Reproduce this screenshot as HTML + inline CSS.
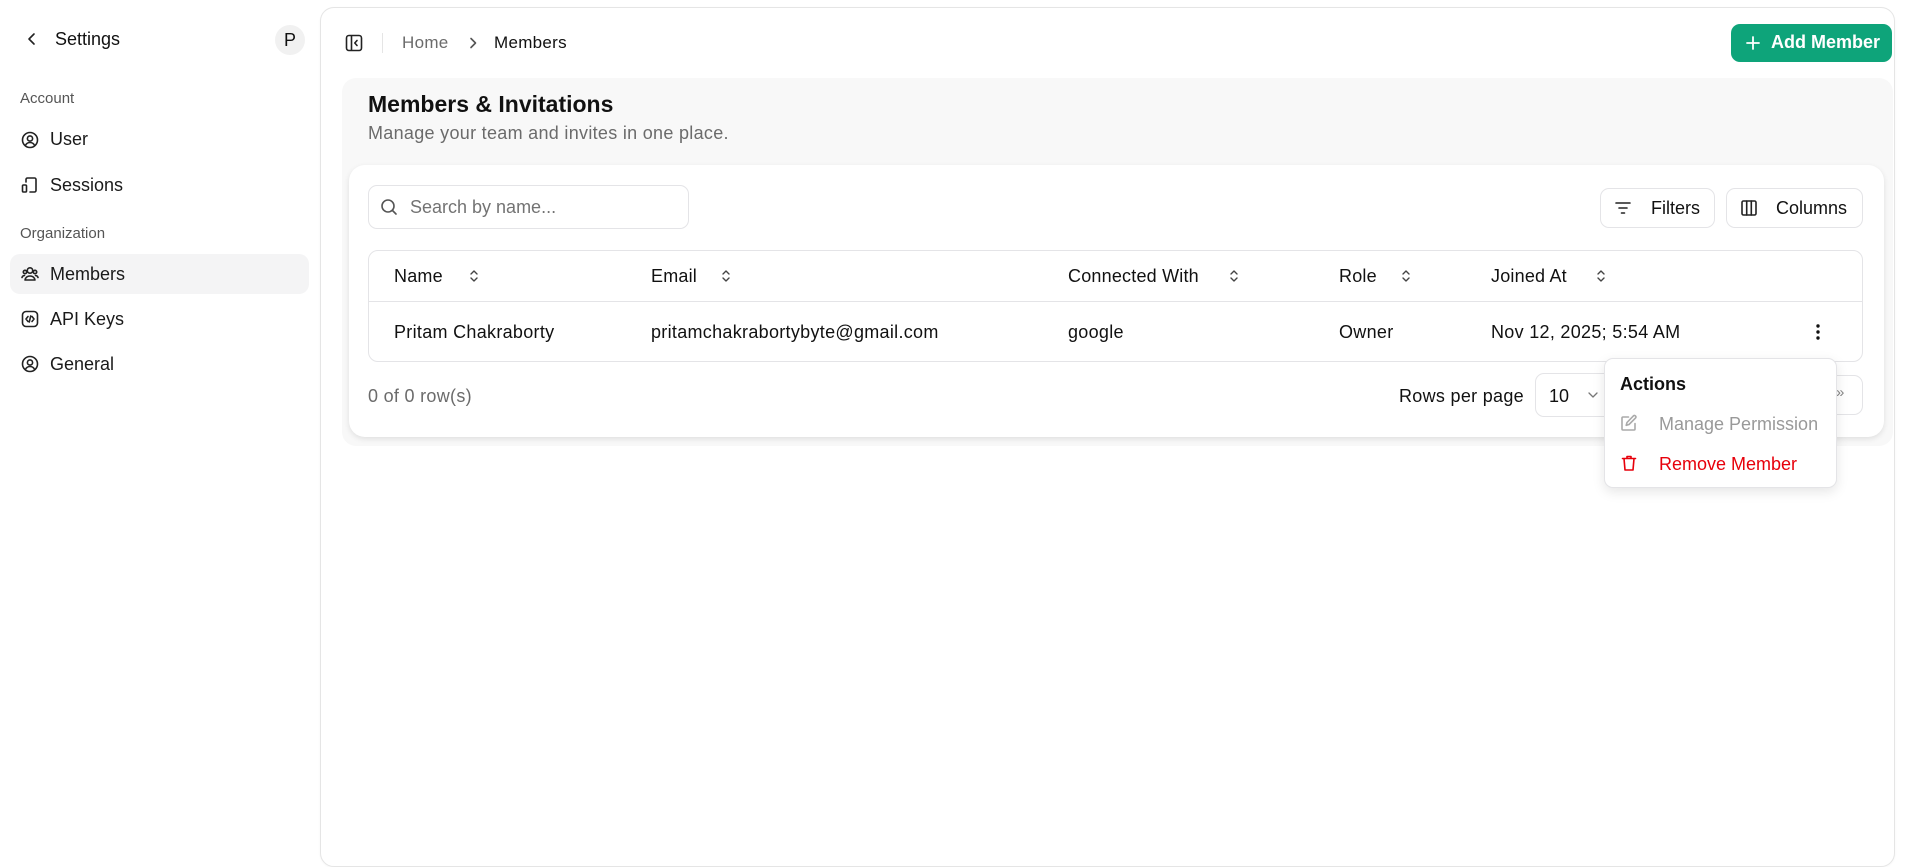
<!DOCTYPE html>
<html><head><meta charset="utf-8"><style>
*{box-sizing:border-box;margin:0;padding:0}
body{width:1918px;height:855px;overflow:hidden;background:#fff;font-family:"Liberation Sans",sans-serif;color:#111;position:relative;font-size:17px}
.a{position:absolute;white-space:nowrap}
svg{display:block}
.ic{stroke:#222;fill:none;stroke-width:1.6;stroke-linecap:round;stroke-linejoin:round}
.nav{font-size:18px;color:#1a1a1a}
.sec{font-size:15px;color:#555}
.btn{position:absolute;border:1px solid #e4e4e7;border-radius:9px;background:#fff}
.th{font-size:18px;color:#111;letter-spacing:.2px}
.td{font-size:18px;color:#111;letter-spacing:.3px}
</style></head><body>
<!-- sidebar -->
<svg class="a" style="left:24px;top:31px" width="16" height="16" viewBox="0 0 16 16"><path class="ic" d="M10 3 L5 8 L10 13"/></svg>
<div class="a" style="left:55px;top:29px;font-size:18px">Settings</div>
<div class="a" style="left:275px;top:25px;width:30px;height:30px;border-radius:50%;background:#f1f1f1;text-align:center;line-height:30px;font-size:18px">P</div>
<div class="a sec" style="left:20px;top:90px">Account</div>
<svg class="a" style="left:21px;top:131px" width="18" height="18" viewBox="0 0 18 18"><circle class="ic" cx="9" cy="9" r="7.5"/><circle class="ic" cx="9" cy="7.5" r="2.6"/><path class="ic" d="M4.3 14.5c1-2 2.7-3 4.7-3s3.7 1 4.7 3"/></svg>
<div class="a nav" style="left:50px;top:129px">User</div>
<svg class="a" style="left:21px;top:176px" width="18" height="18" viewBox="0 0 18 18"><path class="ic" d="M5 6V3.5c0-.8.6-1.5 1.5-1.5h7c.8 0 1.5.7 1.5 1.5v11c0 .8-.7 1.5-1.5 1.5H9"/><rect class="ic" x="1.5" y="9" width="4" height="7" rx="1"/></svg>
<div class="a nav" style="left:50px;top:175px">Sessions</div>
<div class="a sec" style="left:20px;top:225px">Organization</div>
<div class="a" style="left:10px;top:254px;width:299px;height:40px;border-radius:10px;background:#f4f4f5"></div>
<svg class="a" style="left:21px;top:265px" width="18" height="18" viewBox="0 0 18 18"><circle class="ic" cx="9" cy="5.5" r="2.7"/><path class="ic" d="M4 15c.5-2.5 2.5-4 5-4s4.5 1.5 5 4z"/><circle class="ic" cx="4" cy="7" r="1.7"/><circle class="ic" cx="14" cy="7" r="1.7"/><path class="ic" d="M1 12.5c.4-1.2 1.3-2 2.5-2M17 12.5c-.4-1.2-1.3-2-2.5-2"/></svg>
<div class="a nav" style="left:50px;top:264px">Members</div>
<svg class="a" style="left:21px;top:310px" width="18" height="18" viewBox="0 0 18 18"><rect class="ic" x="1.5" y="1.5" width="15" height="15" rx="3.5"/><path class="ic" d="M7 6.5 5 9l2 2.5M11 6.5 13 9l-2 2.5M9.7 6 8.3 12"/></svg>
<div class="a nav" style="left:50px;top:309px">API Keys</div>
<svg class="a" style="left:21px;top:355px" width="18" height="18" viewBox="0 0 18 18"><circle class="ic" cx="9" cy="9" r="7.5"/><circle class="ic" cx="9" cy="7.5" r="2.6"/><path class="ic" d="M4.3 14.5c1-2 2.7-3 4.7-3s3.7 1 4.7 3"/></svg>
<div class="a nav" style="left:50px;top:354px">General</div>

<!-- main panel -->
<div class="a" style="left:320px;top:7px;width:1575px;height:860px;border:1px solid #e5e5e5;border-radius:14px;background:#fff;box-shadow:0 1px 2px rgba(0,0,0,.04)"></div>
<svg class="a" style="left:345px;top:34px" width="18" height="18" viewBox="0 0 18 18"><rect class="ic" x="1.5" y="1.5" width="15" height="15" rx="2.5"/><path class="ic" d="M6.5 2v14M12 6.5 9.8 9 12 11.5"/></svg>
<div class="a" style="left:382px;top:33px;width:1px;height:20px;background:#e5e5e5"></div>
<div class="a" style="left:402px;top:33px;font-size:17px;color:#6b6b6b;letter-spacing:.3px">Home</div>
<svg class="a" style="left:466px;top:36px" width="14" height="14" viewBox="0 0 14 14"><path class="ic" d="M5 2.5 9.5 7 5 11.5" style="stroke:#555"/></svg>
<div class="a" style="left:494px;top:33px;font-size:17px;color:#111;letter-spacing:.3px">Members</div>
<div class="a" style="left:1731px;top:24px;width:161px;height:38px;border-radius:9px;background:#0ea47a"></div>
<svg class="a" style="left:1745px;top:35px" width="16" height="16" viewBox="0 0 16 16"><path d="M8 2v12M2 8h12" stroke="#fff" stroke-width="1.8" stroke-linecap="round"/></svg>
<div class="a" style="left:1771px;top:32px;font-size:18px;font-weight:bold;color:#fff">Add Member</div>

<!-- gray section -->
<div class="a" style="left:342px;top:78px;width:1551px;height:368px;border-radius:14px;background:#f8f8f8"></div>
<div class="a" style="left:368px;top:91px;font-size:23px;font-weight:bold;color:#111">Members &amp; Invitations</div>
<div class="a" style="left:368px;top:123px;font-size:18px;color:#6b6b6b;letter-spacing:.3px">Manage your team and invites in one place.</div>

<!-- card -->
<div class="a" style="left:349px;top:165px;width:1535px;height:272px;border-radius:16px;background:#fff;box-shadow:0 2px 6px rgba(0,0,0,.1)"></div>
<div class="btn" style="left:368px;top:185px;width:321px;height:44px"></div>
<svg class="a" style="left:380px;top:198px" width="18" height="18" viewBox="0 0 18 18"><circle class="ic" cx="8" cy="8" r="6" style="stroke:#555"/><path class="ic" d="m12.5 12.5 3.5 3.5" style="stroke:#555"/></svg>
<div class="a" style="left:410px;top:197px;font-size:18px;color:#737373">Search by name...</div>
<div class="btn" style="left:1600px;top:188px;width:115px;height:40px"></div>
<svg class="a" style="left:1614px;top:199px" width="18" height="18" viewBox="0 0 18 18"><path class="ic" d="M2 4h14M5 9h8M7.5 14h3"/></svg>
<div class="a" style="left:1651px;top:198px;font-size:18px">Filters</div>
<div class="btn" style="left:1726px;top:188px;width:137px;height:40px"></div>
<svg class="a" style="left:1740px;top:199px" width="18" height="18" viewBox="0 0 18 18"><rect class="ic" x="2" y="2" width="14" height="14" rx="1.5"/><path class="ic" d="M6.7 2v14M11.3 2v14"/></svg>
<div class="a" style="left:1776px;top:198px;font-size:18px">Columns</div>

<div class="a" style="left:368px;top:250px;width:1495px;height:112px;border:1px solid #e4e4e7;border-radius:10px"></div>
<div class="a" style="left:369px;top:301px;width:1493px;height:1px;background:#e4e4e7"></div>
<div class="a th" style="left:394px;top:266px">Name</div>
<div class="a th" style="left:651px;top:266px">Email</div>
<div class="a th" style="left:1068px;top:266px">Connected With</div>
<div class="a th" style="left:1339px;top:266px">Role</div>
<div class="a th" style="left:1491px;top:266px">Joined At</div>
<svg class="a" style="left:467px;top:267px" width="14" height="18" viewBox="0 0 14 18"><path class="ic" d="M4 7l3-3 3 3M4 11l3 3 3-3" style="stroke:#444;stroke-width:1.4"/></svg>
<svg class="a" style="left:719px;top:267px" width="14" height="18" viewBox="0 0 14 18"><path class="ic" d="M4 7l3-3 3 3M4 11l3 3 3-3" style="stroke:#444;stroke-width:1.4"/></svg>
<svg class="a" style="left:1227px;top:267px" width="14" height="18" viewBox="0 0 14 18"><path class="ic" d="M4 7l3-3 3 3M4 11l3 3 3-3" style="stroke:#444;stroke-width:1.4"/></svg>
<svg class="a" style="left:1399px;top:267px" width="14" height="18" viewBox="0 0 14 18"><path class="ic" d="M4 7l3-3 3 3M4 11l3 3 3-3" style="stroke:#444;stroke-width:1.4"/></svg>
<svg class="a" style="left:1594px;top:267px" width="14" height="18" viewBox="0 0 14 18"><path class="ic" d="M4 7l3-3 3 3M4 11l3 3 3-3" style="stroke:#444;stroke-width:1.4"/></svg>
<div class="a td" style="left:394px;top:322px">Pritam Chakraborty</div>
<div class="a td" style="left:651px;top:322px">pritamchakrabortybyte@gmail.com</div>
<div class="a td" style="left:1068px;top:322px">google</div>
<div class="a td" style="left:1339px;top:322px">Owner</div>
<div class="a td" style="left:1491px;top:322px">Nov 12, 2025; 5:54 AM</div>
<svg class="a" style="left:1812px;top:322px" width="12" height="20" viewBox="0 0 12 20"><circle cx="6" cy="4" r="1.7" fill="#111"/><circle cx="6" cy="10" r="1.7" fill="#111"/><circle cx="6" cy="16" r="1.7" fill="#111"/></svg>

<div class="a" style="left:368px;top:386px;font-size:18px;color:#6b6b6b;letter-spacing:.3px">0 of 0 row(s)</div>
<div class="a" style="left:1399px;top:386px;font-size:18px;letter-spacing:.3px">Rows per page</div>
<div class="btn" style="left:1535px;top:373px;width:80px;height:44px"></div>
<div class="a" style="left:1549px;top:386px;font-size:18px">10</div>
<svg class="a" style="left:1587px;top:389px" width="12" height="12" viewBox="0 0 12 12"><path class="ic" d="M2 4l4 4 4-4" style="stroke:#777;stroke-width:1.3"/></svg>
<div class="btn" style="left:1818px;top:375px;width:45px;height:40px"></div>
<div class="a" style="left:1836px;top:384px;font-size:15px;color:#888">»</div>

<!-- dropdown -->
<div class="a" style="left:1604px;top:358px;width:233px;height:130px;border:1px solid #e4e4e7;border-radius:9px;background:#fff;box-shadow:0 4px 12px rgba(0,0,0,.1)"></div>
<div class="a" style="left:1620px;top:374px;font-size:18px;font-weight:bold">Actions</div>
<svg class="a" style="left:1620px;top:414px" width="18" height="18" viewBox="0 0 18 18"><path class="ic" d="M15 9.5V15a1 1 0 0 1-1 1H3a1 1 0 0 1-1-1V4a1 1 0 0 1 1-1h5.5" style="stroke:#aaa"/><path class="ic" d="M13.5 1.8a1.5 1.5 0 0 1 2.1 2.1L9 10.5l-2.8.8.8-2.8z" style="stroke:#aaa"/></svg>
<div class="a" style="left:1659px;top:414px;font-size:18px;color:#999">Manage Permission</div>
<svg class="a" style="left:1620px;top:454px" width="18" height="18" viewBox="0 0 18 18"><path class="ic" d="M2.5 4.5h13M7 4.5V2.5h4v2M4 4.5l1 11.5h8l1-11.5" style="stroke:#e7000b"/></svg>
<div class="a" style="left:1659px;top:454px;font-size:18px;color:#e7000b">Remove Member</div>
</body></html>
